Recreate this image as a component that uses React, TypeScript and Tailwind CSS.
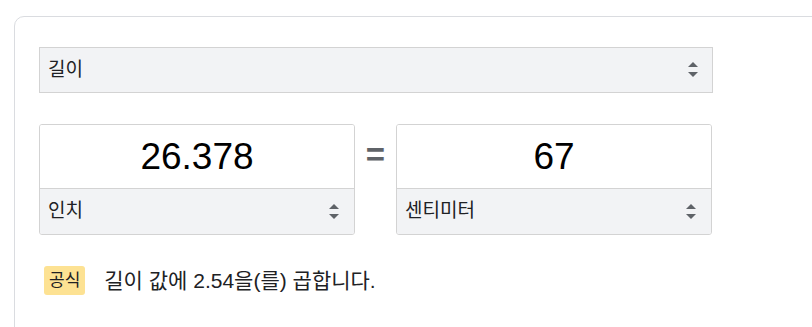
import React from "react";

const font = { fontFamily: '"Liberation Sans", Arial, "Noto Sans CJK KR", sans-serif' };

function Arrows() {
  return (
    <svg width="12" height="18" viewBox="0 0 12 18" className="shrink-0">
      <path d="M1 6 L6 1 L11 6 Z" fill="#5f6368" />
      <path d="M1 11 L6 16 L11 11 Z" fill="#5f6368" />
    </svg>
  );
}

function UnitBox({ value, unit }: { value: string; unit: string }) {
  return (
    <div className="w-[316px] h-[111px] flex flex-col border border-[#d3d3d3] rounded-[3px] overflow-hidden">
      <div className="h-[63px] bg-white flex items-center justify-center text-[37px] text-black">
        {value}
      </div>
      <div className="flex-1 bg-[#f2f3f5] border-t border-[#d3d3d3] flex items-center justify-between pl-[8px] pr-[14px] text-[19px] text-[#202124]">
        <span>{unit}</span>
        <Arrows />
      </div>
    </div>
  );
}

export default function App() {
  return (
    <div className="w-[812px] h-[327px] overflow-hidden bg-white" style={font}>
      <div className="ml-[14px] mt-[16px] w-[900px] h-[400px] border border-[#dadce0] rounded-[10px] pl-[24px] pt-[30px]">
        <div className="w-[674px] h-[46px] border border-[#d3d3d3] bg-[#f2f3f5] flex items-center justify-between pl-[8px] pr-[13px] text-[19px] text-[#202124]">
          <span>길이</span>
          <Arrows />
        </div>
        <div className="mt-[31px] flex items-start">
          <UnitBox value="26.378" unit="인치" />
          <div className="w-[41px] h-[64px] flex items-center justify-center text-[33px] font-bold text-[#5f6368] pb-[2px]">=</div>
          <UnitBox value="67" unit="센티미터" />
        </div>
        <div className="mt-[30px] ml-[5px] flex items-center text-[#202124]">
          <span className="bg-[#fde293] rounded-[3px] px-[5px] h-[29px] flex items-center text-[17px]">공식</span>
          <span className="ml-[19px] text-[21px]">길이 값에 2.54을(를) 곱합니다.</span>
        </div>
      </div>
    </div>
  );
}
